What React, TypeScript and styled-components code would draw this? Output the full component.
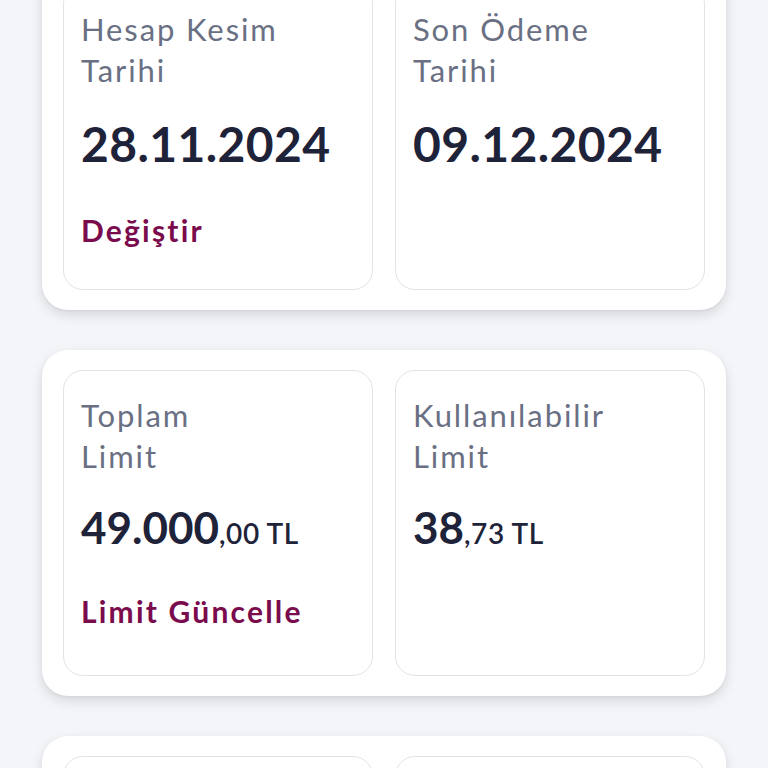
import React from 'react';
import styled, { createGlobalStyle } from 'styled-components';

const GlobalStyle = createGlobalStyle`
  html, body {
    margin: 0;
    padding: 0;
    background: #f4f5f8;
    overflow: hidden;
  }
  body {
    font-family: Lato, "Open Sans", "Noto Sans", sans-serif;
    -webkit-font-smoothing: antialiased;
  }
  * {
    box-sizing: border-box;
  }
`;

type Amount = { main: string; fraction?: string };

type Info = {
  label: [string, string];
  value: Amount;
  big?: boolean;
  action?: string;
};

const sections: Info[][] = [
  [
    { label: ['Hesap Kesim', 'Tarihi'], value: { main: '28.11.2024' }, big: true, action: 'Değiştir' },
    { label: ['Son Ödeme', 'Tarihi'], value: { main: '09.12.2024' }, big: true },
  ],
  [
    { label: ['Toplam', 'Limit'], value: { main: '49.000', fraction: ',00 TL' }, action: 'Limit Güncelle' },
    { label: ['Kullanılabilir', 'Limit'], value: { main: '38', fraction: ',73 TL' } },
  ],
  [
    { label: ['Dönem', 'Borcu'], value: { main: '10.961', fraction: ',27 TL' }, action: 'Borç Öde' },
    { label: ['Asgari Ödeme', 'Tutarı'], value: { main: '4.384', fraction: ',51 TL' } },
  ],
];

const Page = styled.div`
  display: flex;
  flex-direction: column;
  gap: 40px;
  padding: 0 42px 40px;
  margin-top: -36px;
`;

const Card = styled.section`
  background: #ffffff;
  border-radius: 26px;
  padding: 20px 21px;
  display: grid;
  grid-template-columns: 1fr 1fr;
  gap: 22px;
  box-shadow: 0 5px 12px rgba(20, 24, 40, 0.13), 0 1px 3px rgba(20, 24, 40, 0.05);
`;

const Tile = styled.div`
  border: 1.5px solid #e2e3e8;
  border-radius: 20px;
  padding: 24px 17px 20px 17px;
  display: flex;
  flex-direction: column;
  min-height: 306px;
`;

const Label = styled.div`
  color: #6a7083;
  font-size: 31px;
  line-height: 41px;
  font-weight: 400;
  letter-spacing: 1.9px;
`;

const Value = styled.div<{ $big?: boolean }>`
  margin-top: 24px;
  color: #1e2339;
  font-weight: 700;
  font-size: ${p => (p.$big ? '48px' : '44px')};
  letter-spacing: ${p => (p.$big ? '0.4px' : '0')};
  line-height: 1.2;
  white-space: nowrap;
`;

const Fraction = styled.span`
  font-size: 28px;
  font-weight: 600;
  letter-spacing: 0.6px;
`;

const Action = styled.a`
  margin-top: 39px;
  color: #7a0b4c;
  font-size: 30px;
  line-height: 36px;
  font-weight: 700;
  letter-spacing: 2.2px;
  text-decoration: none;
`;

export default function App() {
  return (
    <>
      <GlobalStyle />
      <Page>
        {sections.map((row, i) => (
          <Card key={i}>
            {row.map(item => (
              <Tile key={item.label.join(' ')}>
                <Label>
                  {item.label[0]}
                  <br />
                  {item.label[1]}
                </Label>
                <Value $big={item.big}>
                  {item.value.main}
                  {item.value.fraction && <Fraction>{item.value.fraction}</Fraction>}
                </Value>
                {item.action && <Action href="#">{item.action}</Action>}
              </Tile>
            ))}
          </Card>
        ))}
      </Page>
    </>
  );
}
